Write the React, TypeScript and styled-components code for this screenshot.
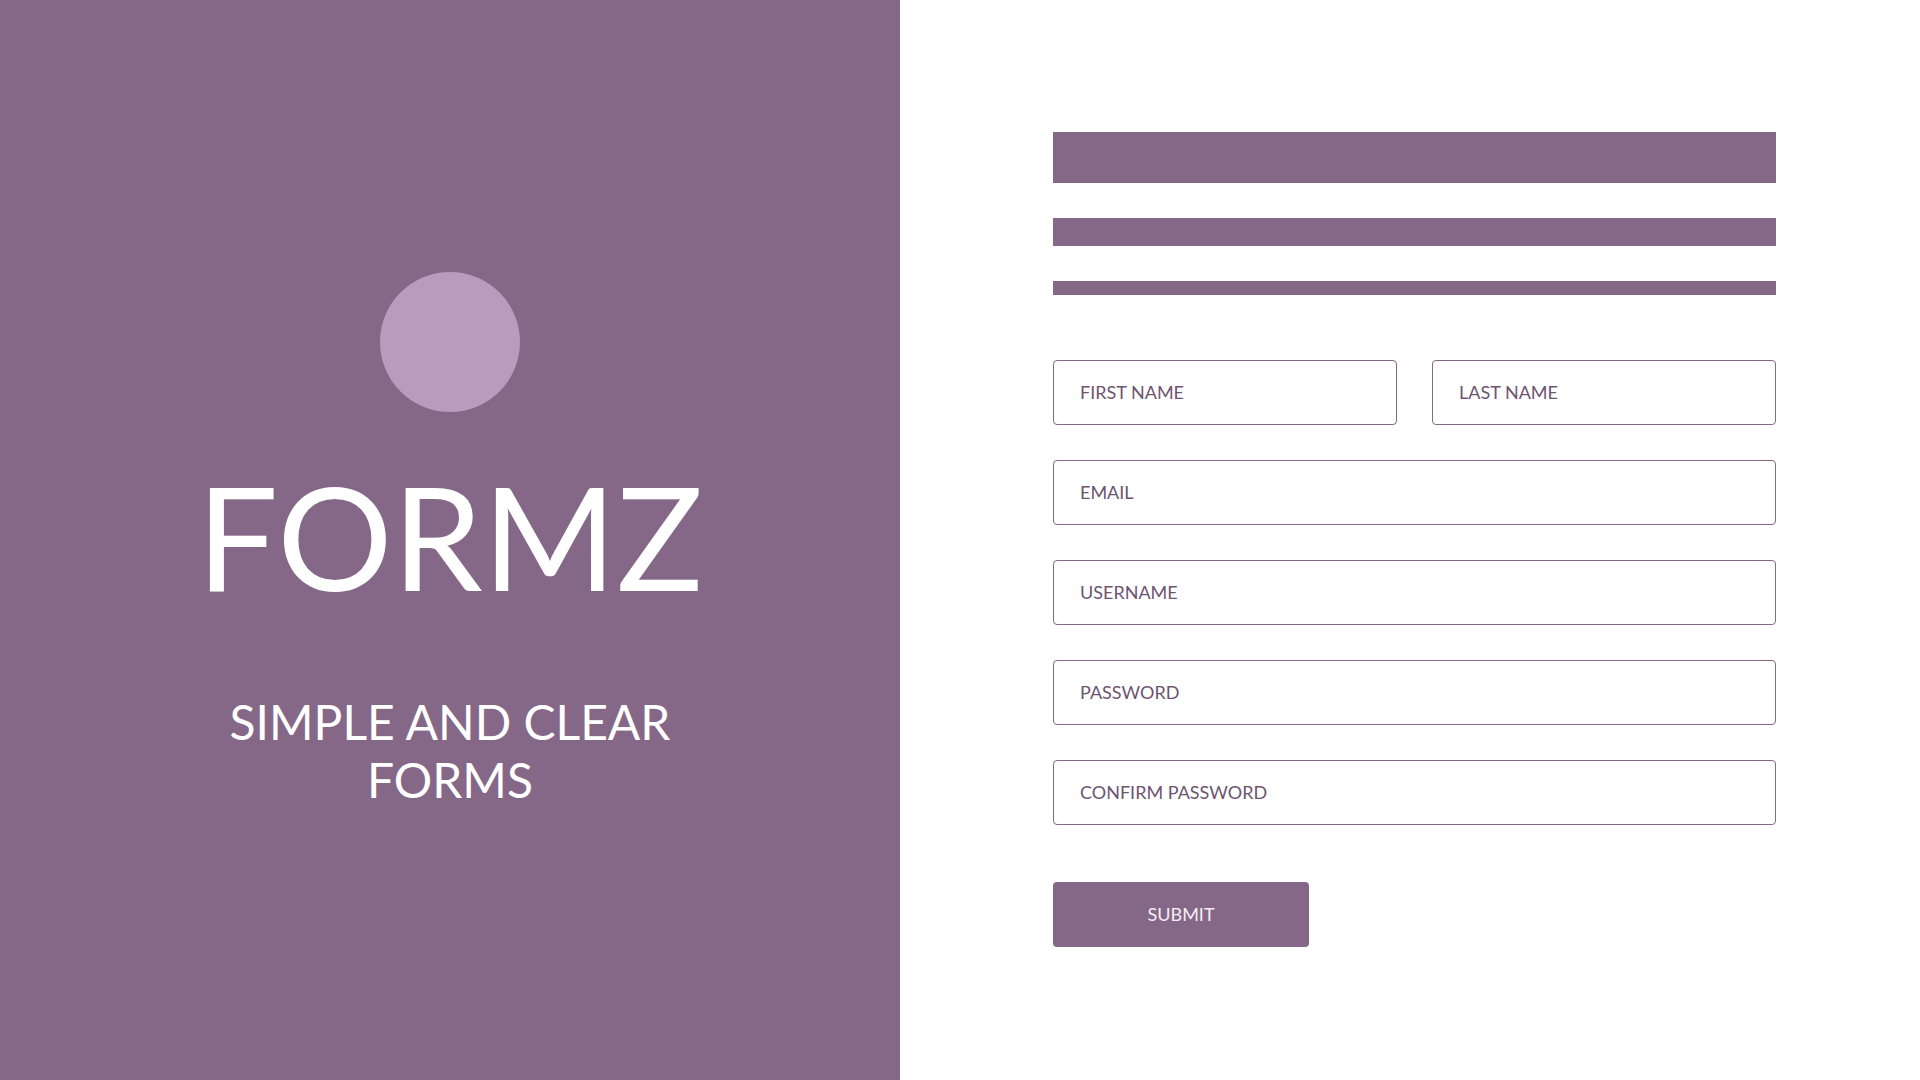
import React from "react";
import styled, { createGlobalStyle } from "styled-components";

const GlobalStyle = createGlobalStyle`
  html, body {
    margin: 0;
    padding: 0;
    background: #ffffff;
  }
  body {
    font-family: "Lato", "Open Sans", "Liberation Sans", sans-serif;
  }
  * { box-sizing: border-box; }
`;

const PURPLE = "#856787";

const Page = styled.div`
  display: grid;
  grid-template-columns: 900px 1fr;
  width: 1920px;
  height: 1080px;
  overflow: hidden;
`;

const Hero = styled.section`
  background: ${PURPLE};
  display: flex;
  flex-direction: column;
  align-items: center;
  justify-content: center;
  color: #ffffff;
  padding-top: 1px;
`;

const Logo = styled.div`
  width: 140px;
  height: 140px;
  border-radius: 50%;
  background: #ba9abe;
`;

const Title = styled.h1`
  margin: 52px 0 0;
  font-family: "Lato", sans-serif;
  font-weight: 400;
  font-size: 144px;
  line-height: 144px;
  letter-spacing: 0;
`;

const Tagline = styled.p`
  margin: 85px 0 0;
  width: 480px;
  text-align: center;
  font-family: "Lato", sans-serif;
  font-weight: 400;
  font-size: 48px;
  line-height: 58px;
`;

const FormSide = styled.section`
  display: flex;
  flex-direction: column;
  justify-content: center;
  padding-left: 153px;
  padding-bottom: 2px;
`;

const Form = styled.form`
  width: 723px;
  display: flex;
  flex-direction: column;
`;

const Bar = styled.div<{ $h: number; $gap: number }>`
  height: ${(p) => p.$h}px;
  margin-top: ${(p) => p.$gap}px;
  background: ${PURPLE};
`;

const Fields = styled.div`
  margin-top: 65px;
  display: flex;
  flex-direction: column;
  gap: 35px;
`;

const Row = styled.div`
  display: grid;
  grid-template-columns: 344px 344px;
  column-gap: 35px;
`;

const Field = styled.label`
  display: flex;
  align-items: center;
  height: 65px;
  padding: 0 26px;
  border: 1px solid ${PURPLE};
  border-radius: 4px;
  background: #ffffff;
  color: #6d5470;
  font-family: "Lato", sans-serif;
  font-size: 18px;
  cursor: text;
`;

const Submit = styled.button`
  margin-top: 57px;
  width: 256px;
  height: 65px;
  border: none;
  border-radius: 4px;
  background: ${PURPLE};
  color: #f4eef4;
  font-family: "Lato", sans-serif;
  font-size: 18px;
  cursor: pointer;
`;

export default function App() {
  return (
    <>
      <GlobalStyle />
      <Page>
        <Hero>
          <Logo />
          <Title>FORMZ</Title>
          <Tagline>SIMPLE AND CLEAR FORMS</Tagline>
        </Hero>
        <FormSide>
          <Form onSubmit={(e) => e.preventDefault()}>
            <Bar $h={51} $gap={0} />
            <Bar $h={28} $gap={35} />
            <Bar $h={14} $gap={35} />
            <Fields>
              <Row>
                <Field>FIRST NAME</Field>
                <Field>LAST NAME</Field>
              </Row>
              <Field>EMAIL</Field>
              <Field>USERNAME</Field>
              <Field>PASSWORD</Field>
              <Field>CONFIRM PASSWORD</Field>
            </Fields>
            <Submit type="submit">SUBMIT</Submit>
          </Form>
        </FormSide>
      </Page>
    </>
  );
}
